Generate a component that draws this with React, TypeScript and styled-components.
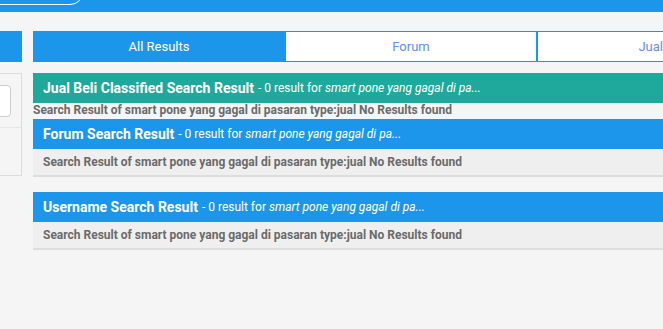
import { type FC } from "react";
import styled, { createGlobalStyle } from "styled-components";

const GlobalStyle = createGlobalStyle`
    html, body {
        margin:0;
        padding:0;
        background:#f5f5f5;
        overflow:hidden;
    }
    body {
        font-family: Roboto, "Liberation Sans", Arial, sans-serif;
    }
`;

const query = "smart pone yang gagal di pa...";
const bodyText = "Search Result of smart pone yang gagal di pasaran type:jual No Results found";

type Section = { title: string; color: string; plain?: boolean };

const sections: Section[] = [
    { title: "Jual Beli Classified Search Result", color: "#1ea99c", plain: true },
    { title: "Forum Search Result", color: "#1b96ea" },
    { title: "Username Search Result", color: "#1b96ea" },
];

const tabs = ["All Results", "Forum", "Jual Beli", "Username"];

const App: FC = () => {
    return (
        <>
            <GlobalStyle />
            <Header>
                <SearchBox />
            </Header>
            <Page>
                <Sidebar>
                    <SideBar />
                    <SideBox>
                        <SideInputRow>
                            <SideInput />
                        </SideInputRow>
                    </SideBox>
                </Sidebar>
                <Main>
                    <Tabs>
                        {tabs.map((t, i) => (
                            <Tab key={t} $active={i === 0}>{t}</Tab>
                        ))}
                    </Tabs>
                    {sections.map((s) => (
                        <ResultBlock key={s.title} $plain={s.plain}>
                            <ResultHead $color={s.color}>
                                <Title>{s.title}</Title>
                                <Meta> - 0 result for <em>{query}</em></Meta>
                            </ResultHead>
                            <ResultBody $plain={s.plain}>{bodyText}</ResultBody>
                        </ResultBlock>
                    ))}
                </Main>
            </Page>
        </>
    );
};

export default App;

const Header = styled.div`
    height:12px;
    background:#1b96ea;
    overflow:hidden;
`;

const SearchBox = styled.div`
    width:460px;
    height:30px;
    margin-top:-27px;
    margin-left:-378px;
    border:1px solid #ffffff;
    border-radius:14px;
`;

const Page = styled.div`
    display:flex;
    gap:11px;
    margin-left:-178px;
    padding-top:19px;
`;

const Sidebar = styled.div`
    width:200px;
    flex:none;
    display:flex;
    flex-direction:column;
    gap:11px;
`;

const SideBar = styled.div`
    height:31px;
    background:#1b96ea;
`;

const SideBox = styled.div`
    height:103px;
    background:#f5f5f5;
    border:1px solid #dcdcdc;
    box-sizing:border-box;
`;

const SideInputRow = styled.div`
    padding:11px 10px 10px 10px;
    border-bottom:1px solid #e6e6e6;
`;

const SideInput = styled.div`
    height:32px;
    background:#ffffff;
    border:1px solid #cccccc;
    border-radius:4px;
    box-sizing:border-box;
`;

const Main = styled.div`
    width:1008px;
    flex:none;
    display:flex;
    flex-direction:column;
`;

const Tabs = styled.div`
    display:flex;
    height:31px;
    margin-bottom:11px;
`;

const Tab = styled.div<{ $active?: boolean }>`
    flex:1;
    display:flex;
    align-items:center;
    justify-content:center;
    font-size:13px;
    box-sizing:border-box;
    border:1px solid #1b96ea;
    border-left:${(p) => (p.$active ? "1px" : "0")} solid #1b96ea;
    background:${(p) => (p.$active ? "#1b96ea" : "#ffffff")};
    color:${(p) => (p.$active ? "#ffffff" : "#5f8ff2")};
    & + & {
        border-left:1px solid #1b96ea;
    }
`;

const ResultBlock = styled.div<{ $plain?: boolean }>`
    margin-bottom:${(p) => (p.$plain ? "1px" : "15px")};
`;

const ResultHead = styled.div<{ $color: string }>`
    height:30px;
    background:${(p) => p.$color};
    color:#ffffff;
    display:flex;
    align-items:center;
    padding-left:10px;
    white-space:nowrap;
`;

const Title = styled.span`
    font-size:14px;
    font-weight:bold;
`;

const Meta = styled.span`
    font-size:12px;
    margin-left:4px;
    em { font-style:italic; }
`;

const ResultBody = styled.div<{ $plain?: boolean }>`
    font-size:12px;
    font-weight:bold;
    color:#6a6a6a;
    white-space:nowrap;
    ${(p) =>
        p.$plain
            ? `
        height:15px;
        line-height:15px;
        padding-left:0;
    `
            : `
        height:26px;
        line-height:26px;
        padding-left:10px;
        background:#efefef;
        border-bottom:2px solid #dddddd;
    `}
`;
